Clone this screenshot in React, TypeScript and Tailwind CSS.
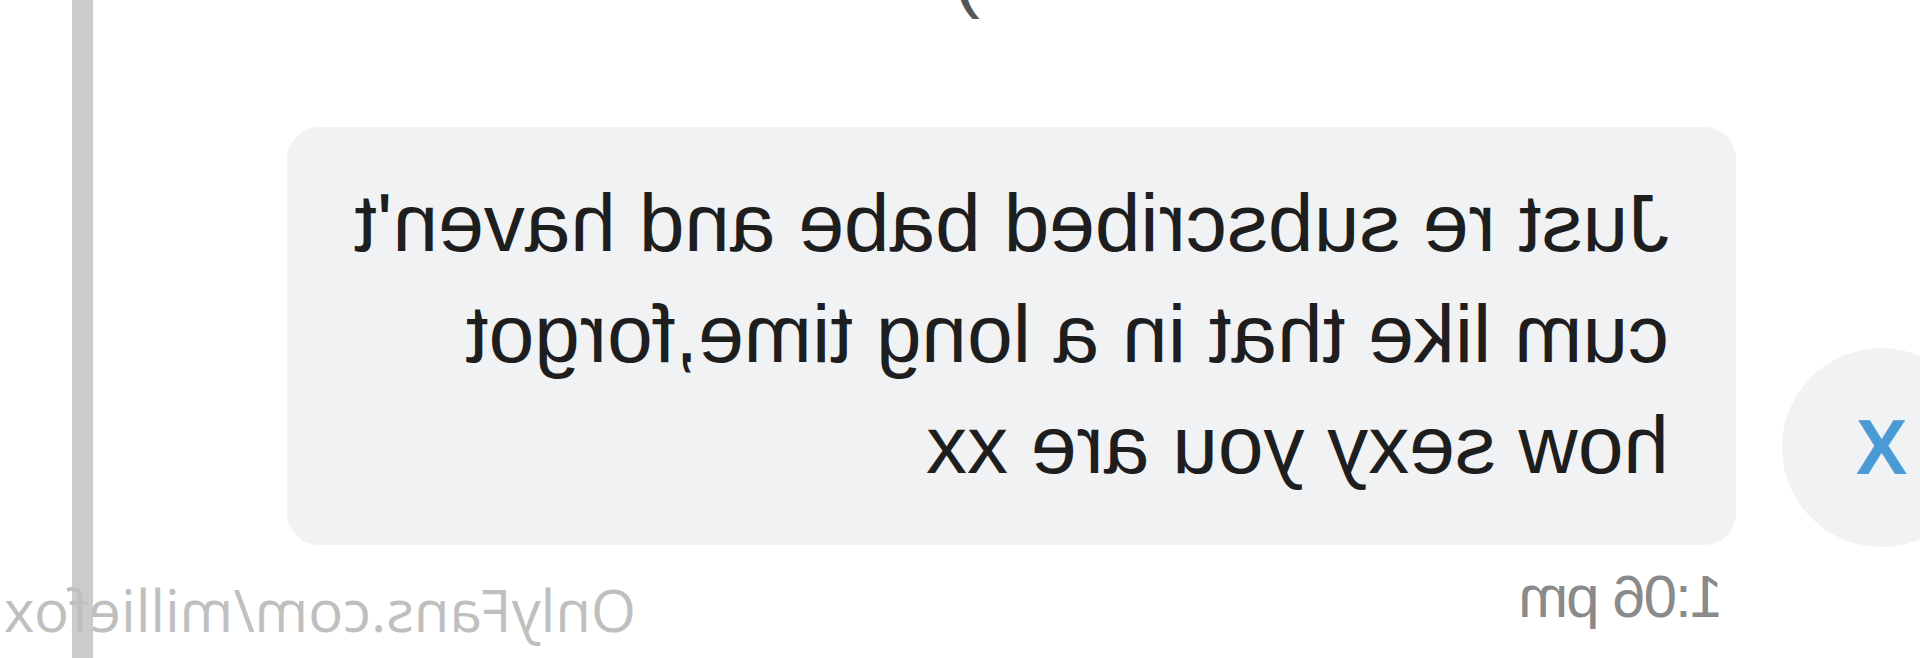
import React from "react";

export default function App() {
  return (
    <div className="w-[1920px] h-[658px] overflow-hidden bg-white relative -scale-x-100 font-['Liberation_Sans',Arial,sans-serif]">
      <div className="flex h-full">
        <div className="flex-1 flex flex-col">
          <div className="h-[127px] pl-[940px]">
            <div className="-mt-[73px] text-[82px] leading-[94px] text-[#555555]">)</div>
          </div>
          <div className="flex items-end">
            <div className="-ml-[61px] -mb-[2px] w-[199px] h-[199px] rounded-full bg-[#f1f2f4] flex items-center justify-center shrink-0">
              <span className="text-[77px] font-bold text-[#4a9bd5] leading-none">X</span>
            </div>
            <div className="ml-[46px] w-[1449px] shrink-0 rounded-[32px] bg-[#f1f2f4] pl-[67px] pt-[40px] pb-[45px] text-[82px] leading-[111px] text-[#1e1e1e] whitespace-nowrap">
              Just re subscribed babe and haven't
              <br />
              cum like that in a long time,forgot
              <br />
              how sexy you are xx
            </div>
          </div>
          <div className="pl-[197px] mt-[22px] text-[60px] tracking-[-2px] leading-none text-[#8a8a8a]">1:06 pm</div>
        </div>
        <div className="w-[21px] bg-[#cbcbcb] mr-[72px] shrink-0" />
      </div>
      <div className="absolute top-[582px] left-[1284px] font-['Open_Sans',sans-serif] text-[58px] leading-[56px] text-[#bfbfbf] whitespace-nowrap">
        OnlyFans.com/milliefox
      </div>
    </div>
  );
}
